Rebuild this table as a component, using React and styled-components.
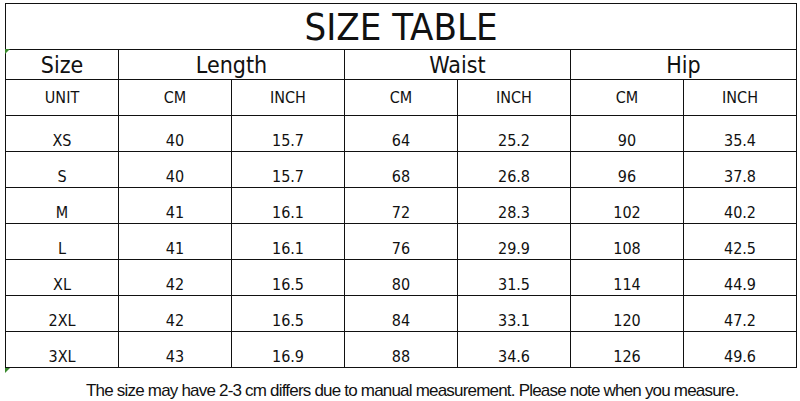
import styled, { createGlobalStyle } from 'styled-components';

const GlobalStyle = createGlobalStyle`
    html, body {
        margin: 0;
        padding: 0;
        background: #fff;
    }
`;

const Page = styled.div`
    width: 800px;
    height: 401px;
    padding: 3px 0 0 5px;
    box-sizing: border-box;
    background: #fff;
    font-family: "DejaVu Sans Condensed", "DejaVu Sans", sans-serif;
    color: #111;
`;

const Table = styled.table`
    border-collapse: collapse;
    table-layout: fixed;
    width: 792px;
`;

const Col = styled.col`
    width: 113px;
`;

const Row = styled.tr`
    height: ${(p) => p.h}px;
`;

const Cell = styled.td`
    position: relative;
    border: 1px solid #111;
    padding: 0;
    text-align: center;
    font-size: 16px;
    line-height: 1;
`;

const TitleCell = styled(Cell)`
    font-size: 38px;
    vertical-align: middle;
    padding-top: 1px;
`;

const HeadCell = styled(Cell)`
    font-size: 23px;
    vertical-align: bottom;
    padding-bottom: 2px;
`;

const UnitCell = styled(Cell)`
    vertical-align: middle;
`;

const DataCell = styled(Cell)`
    vertical-align: bottom;
    padding-bottom: 2px;
`;

// little green excel marker in a cell corner
const Marker = styled.span`
    position: absolute;
    left: -1px;
    ${(p) => (p.bottom ? 'bottom: -6px;' : 'top: -1px;')}
    width: 0;
    height: 0;
    border-top: 5px solid #3a8a2e;
    border-right: 5px solid transparent;
`;

const Note = styled.p`
    margin: 13px 0 0 0;
    padding-left: 81px;
    font-family: "Liberation Sans", Arial, sans-serif;
    font-size: 17px;
    line-height: 20px;
    letter-spacing: -0.8px;
    color: #111;
`;

const rows = [
    ['XS', '40', '15.7', '64', '25.2', '90', '35.4'],
    ['S', '40', '15.7', '68', '26.8', '96', '37.8'],
    ['M', '41', '16.1', '72', '28.3', '102', '40.2'],
    ['L', '41', '16.1', '76', '29.9', '108', '42.5'],
    ['XL', '42', '16.5', '80', '31.5', '114', '44.9'],
    ['2XL', '42', '16.5', '84', '33.1', '120', '47.2'],
    ['3XL', '43', '16.9', '88', '34.6', '126', '49.6'],
];

const App = () => {
    return (
        <Page>
            <GlobalStyle />
            <Table>
                <colgroup>
                    {[0, 1, 2, 3, 4, 5, 6].map((i) => (
                        <Col key={i} />
                    ))}
                </colgroup>
                <tbody>
                    <Row h={46}>
                        <TitleCell colSpan={7}>SIZE TABLE</TitleCell>
                    </Row>
                    <Row h={30}>
                        <HeadCell>
                            <Marker />
                            Size
                        </HeadCell>
                        <HeadCell colSpan={2}>Length</HeadCell>
                        <HeadCell colSpan={2}>Waist</HeadCell>
                        <HeadCell colSpan={2}>Hip</HeadCell>
                    </Row>
                    <Row h={36}>
                        <UnitCell>UNIT</UnitCell>
                        <UnitCell>CM</UnitCell>
                        <UnitCell>INCH</UnitCell>
                        <UnitCell>CM</UnitCell>
                        <UnitCell>INCH</UnitCell>
                        <UnitCell>CM</UnitCell>
                        <UnitCell>INCH</UnitCell>
                    </Row>
                    {rows.map((row, r) => (
                        <Row h={36} key={row[0]}>
                            {row.map((v, i) => (
                                <DataCell key={i}>
                                    {i === 0 && r === rows.length - 1 && <Marker bottom />}
                                    {v}
                                </DataCell>
                            ))}
                        </Row>
                    ))}
                </tbody>
            </Table>
            <Note>The size may have 2-3 cm differs due to manual measurement. Please note when you measure.</Note>
        </Page>
    );
};

export default App;
